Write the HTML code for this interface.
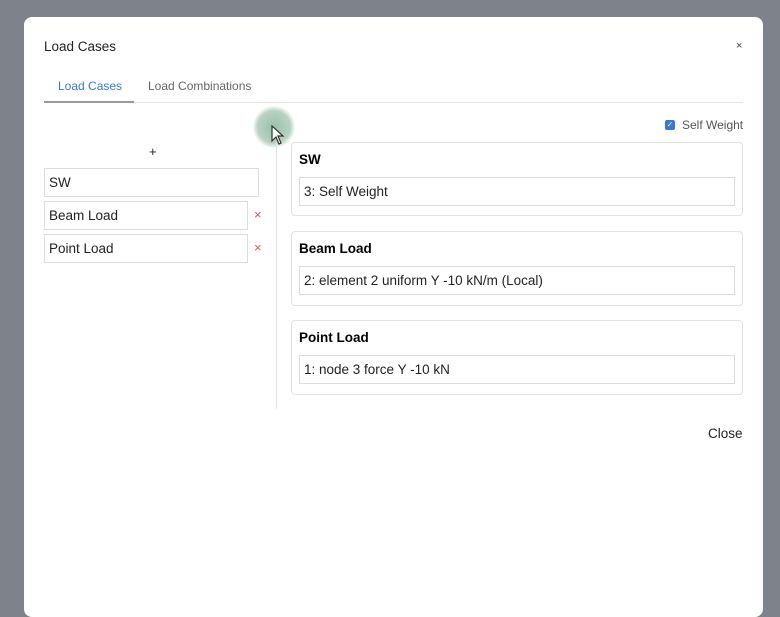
<!DOCTYPE html>
<html><head><style>
body{margin:0;width:780px;height:600px;background:#7d828b;font-family:"Liberation Sans",sans-serif;position:relative;overflow:hidden}
.m{position:absolute;left:24px;top:17px;width:739px;height:600px;background:#fff;border-radius:8px}
.a{position:absolute}
.in{position:absolute;border:1px solid #dcdcdc;box-sizing:border-box;font-size:13.5px;color:#222;padding-left:4px;display:flex;align-items:center;padding-bottom:1px}
.card{position:absolute;left:291px;width:452px;border:1px solid #e2e2e2;border-radius:4px;box-sizing:border-box}
.x{position:absolute;color:#e05555;font-size:13px}
</style></head><body>
<div class="m"></div>
<div class="a" style="left:44px;top:39px;font-size:13.5px;color:#222">Load Cases</div>
<div class="a" style="left:736px;top:40px;font-size:11px;color:#444">×</div>
<div class="a" style="left:58px;top:79px;font-size:12px;color:#3a78d4">Load Cases</div>
<div class="a" style="left:148px;top:79px;font-size:12px;color:#666">Load Combinations</div>
<div class="a" style="left:44px;top:102px;width:699px;height:1px;background:#e4e4e4"></div>
<div class="a" style="left:44px;top:101px;width:90px;height:2px;background:#999"></div>
<div class="a" style="left:253px;top:106px;width:42px;height:42px;border-radius:50%;background:radial-gradient(#9bbfa8,#b8d3c2 55%,rgba(255,255,255,0) 72%)"></div>
<svg class="a" style="left:271px;top:125px" width="14" height="20" viewBox="0 0 14 20"><path d="M1 1 L1 16 L5 12 L8 19 L10 18 L7 11 L12 11 Z" fill="#fff" stroke="#333" stroke-width="1.2"/></svg>
<div class="a" style="left:149px;top:144px;font-size:13px;color:#222">+</div>
<div class="in" style="left:44px;top:168px;width:215px;height:29px">SW</div>
<div class="in" style="left:44px;top:201px;width:204px;height:29px">Beam Load</div>
<div class="x" style="left:254px;top:207px">×</div>
<div class="in" style="left:44px;top:234px;width:204px;height:29px">Point Load</div>
<div class="x" style="left:254px;top:240px">×</div>
<div class="a" style="left:276px;top:142px;width:1px;height:267px;background:#e4e4e4"></div>
<div class="a" style="left:665px;top:120px;width:10px;height:10px;background:#3a78d4;border-radius:2px;color:#fff;font-size:8px;line-height:10px;text-align:center">✓</div>
<div class="a" style="left:682px;top:118px;font-size:12px;color:#555">Self Weight</div>
<div class="card" style="top:142px;height:74px"><div class="a" style="left:7px;top:9px;font-size:13.5px;font-weight:bold">SW</div><div class="in" style="left:7px;top:34px;width:436px;height:29px">3: Self Weight</div></div>
<div class="card" style="top:231px;height:75px"><div class="a" style="left:7px;top:9px;font-size:13.5px;font-weight:bold">Beam Load</div><div class="in" style="left:7px;top:34px;width:436px;height:29px">2: element 2 uniform Y -10 kN/m (Local)</div></div>
<div class="card" style="top:320px;height:75px"><div class="a" style="left:7px;top:9px;font-size:13.5px;font-weight:bold">Point Load</div><div class="in" style="left:7px;top:34px;width:436px;height:29px">1: node 3 force Y -10 kN</div></div>
<div class="a" style="left:708px;top:426px;font-size:13.5px;color:#222">Close</div>
</body></html>
